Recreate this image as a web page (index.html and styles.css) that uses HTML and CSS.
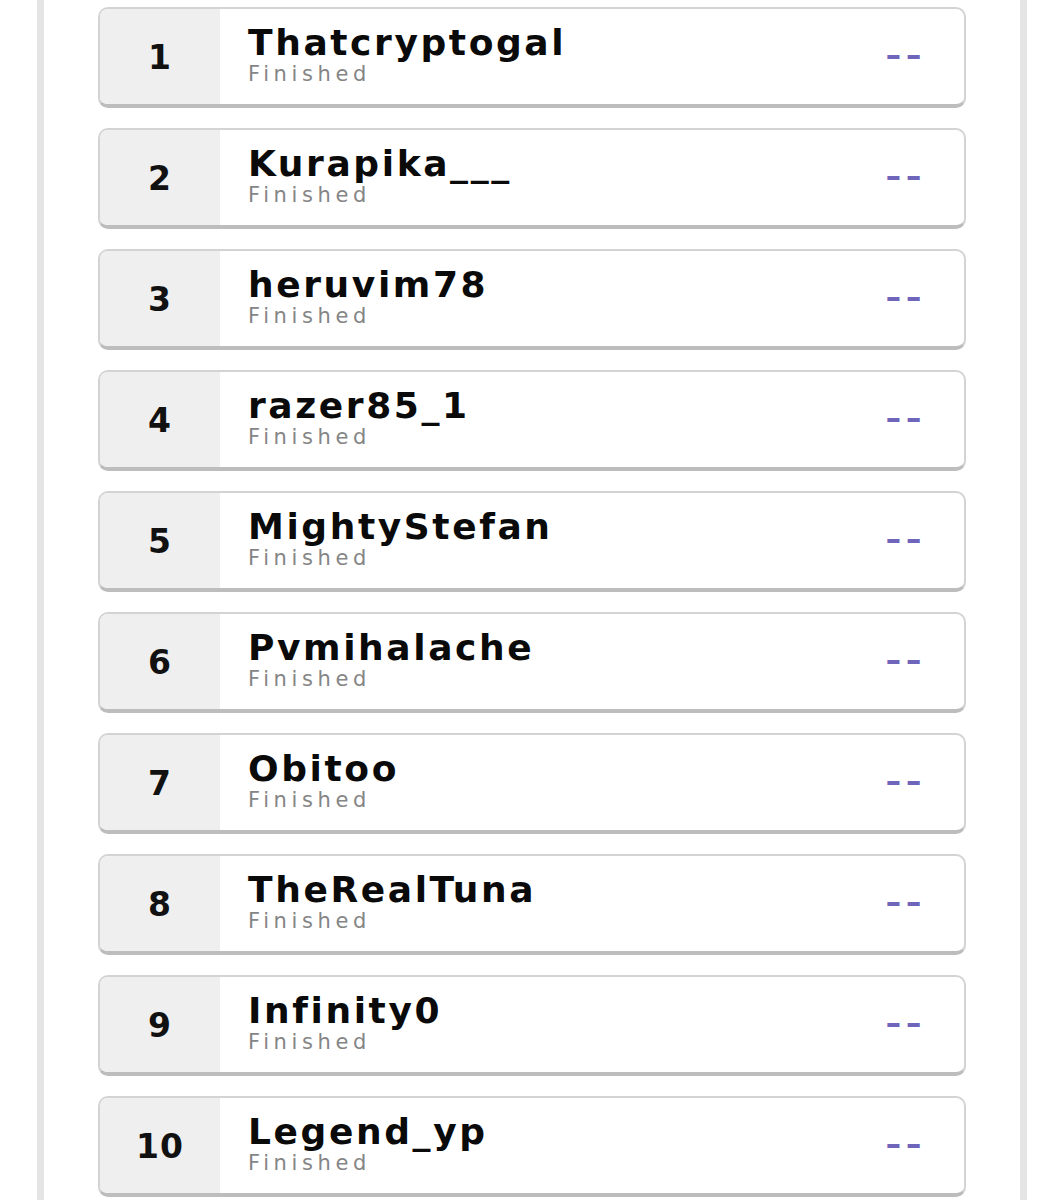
FILE: index.html
```html
<!DOCTYPE html>
<html>
<head>
<meta charset="utf-8">
<link rel="stylesheet" href="styles.css">
</head>
<body>
<div class="frame">
  <ul class="board">
    <li class="row"><div class="rank">1</div><div class="info"><div class="name">Thatcryptogal</div><div class="status">Finished</div></div><div class="score"><span>--</span></div></li>
    <li class="row"><div class="rank">2</div><div class="info"><div class="name">Kurapika___</div><div class="status">Finished</div></div><div class="score"><span>--</span></div></li>
    <li class="row"><div class="rank">3</div><div class="info"><div class="name">heruvim78</div><div class="status">Finished</div></div><div class="score"><span>--</span></div></li>
    <li class="row"><div class="rank">4</div><div class="info"><div class="name">razer85_1</div><div class="status">Finished</div></div><div class="score"><span>--</span></div></li>
    <li class="row"><div class="rank">5</div><div class="info"><div class="name">MightyStefan</div><div class="status">Finished</div></div><div class="score"><span>--</span></div></li>
    <li class="row"><div class="rank">6</div><div class="info"><div class="name">Pvmihalache</div><div class="status">Finished</div></div><div class="score"><span>--</span></div></li>
    <li class="row"><div class="rank">7</div><div class="info"><div class="name">Obitoo</div><div class="status">Finished</div></div><div class="score"><span>--</span></div></li>
    <li class="row"><div class="rank">8</div><div class="info"><div class="name">TheRealTuna</div><div class="status">Finished</div></div><div class="score"><span>--</span></div></li>
    <li class="row"><div class="rank">9</div><div class="info"><div class="name">Infinity0</div><div class="status">Finished</div></div><div class="score"><span>--</span></div></li>
    <li class="row"><div class="rank">10</div><div class="info"><div class="name">Legend_yp</div><div class="status">Finished</div></div><div class="score"><span>--</span></div></li>
  </ul>
</div>
</body>
</html>
```
FILE: styles.css
```css
html, body {
  margin: 0;
  padding: 0;
  background: #ffffff;
}
.frame {
  margin-left: 37px;
  width: 976px;
  min-height: 1200px;
  border-left: 7px solid #e5e5e5;
  border-right: 7px solid #e5e5e5;
  background: #fff;
  box-sizing: content-box;
}
.board {
  list-style: none;
  margin: 0;
  padding: 7px 54px 0 54px;
  display: flex;
  flex-direction: column;
  gap: 20px;
}
.row {
  display: flex;
  align-items: stretch;
  height: 101px;
  box-sizing: border-box;
  border: 2px solid #d3d3d3;
  border-bottom: 4px solid #bdbdbd;
  border-radius: 10px;
  overflow: hidden;
  background: #fff;
}
.rank {
  width: 120px;
  flex: none;
  background: #efefef;
  display: flex;
  align-items: center;
  justify-content: center;
  font-family: "DejaVu Sans", sans-serif;
  font-weight: bold;
  font-size: 33px;
  color: #111;
  padding-top: 2px;
  letter-spacing: 1px;
}
.info {
  flex: 1;
  padding-left: 28px;
  padding-top: 14px;
}
.name {
  font-family: "DejaVu Sans", sans-serif;
  font-weight: bold;
  font-size: 36px;
  line-height: 40px;
  color: #0a0a0a;
  letter-spacing: 2.6px;
}
.status {
  font-family: "DejaVu Sans", sans-serif;
  font-size: 21px;
  line-height: 22px;
  color: #858585;
  letter-spacing: 4.6px;
  margin-top: 0;
}
.score {
  flex: none;
  width: 116px;
  display: flex;
  align-items: center;
  justify-content: center;
  padding-bottom: 2px;
  box-sizing: border-box;
}
.score span {
  display: inline-block;
  font-family: "DejaVu Sans", sans-serif;
  font-weight: bold;
  font-size: 28px;
  color: #6f65bb;
  letter-spacing: 3px;
  transform: scaleX(1.4);
}
```
